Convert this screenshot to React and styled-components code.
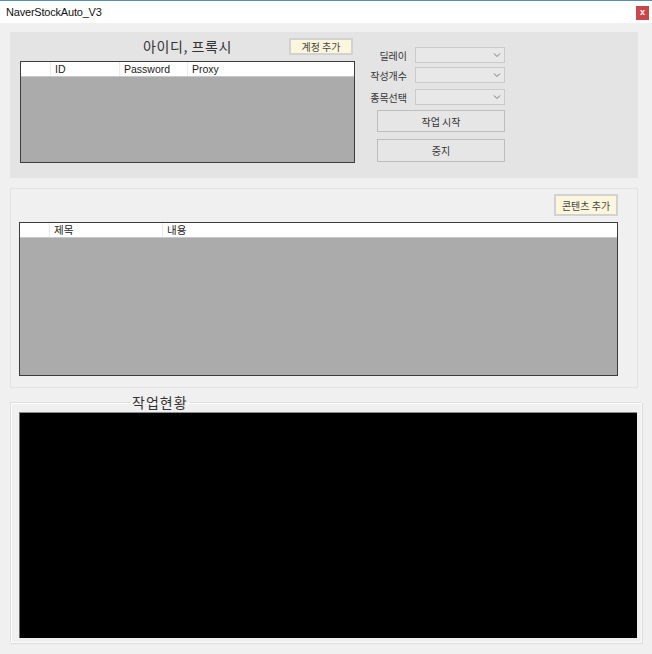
import React from "react";
import styled, { createGlobalStyle } from "styled-components";

const GlobalStyle = createGlobalStyle`
  html, body {
    margin: 0;
    padding: 0;
    background: #f0f0f0;
  }
  body {
    font-family: "Liberation Sans", "Noto Sans CJK KR", sans-serif;
    font-size: 11px;
    color: #1e1e1e;
  }
`;

const Window = styled.div`
  width: 652px;
  height: 654px;
  display: flex;
  flex-direction: column;
  background: #f0f0f0;
  overflow: hidden;
`;

const TitleBar = styled.div`
  height: 22px;
  border-top: 1px solid #5a8db4;
  background: #ffffff;
  display: flex;
  align-items: center;
  justify-content: space-between;
  padding: 0 3px 0 6px;
`;

const TitleText = styled.span`
  font-size: 11px;
  color: #111;
  letter-spacing: -0.2px;
`;

const CloseButton = styled.div`
  width: 13px;
  height: 14px;
  margin-top: 2px;
  background: #c9474a;
  color: #fff;
  font-size: 9px;
  line-height: 13px;
  text-align: center;
  font-weight: bold;
`;

const Body = styled.div`
  flex: 1;
  display: flex;
  flex-direction: column;
  padding: 9px 10px 0 10px;
  gap: 10px;
`;

const AccountPanel = styled.div`
  width: 628px;
  height: 146px;
  box-sizing: border-box;
  background: #e4e4e4;
  display: flex;
  align-items: flex-start;
  gap: 5px;
  padding: 6px 0 0 10px;
`;

const LeftColumn = styled.div`
  width: 335px;
  display: flex;
  flex-direction: column;
  gap: 6px;
`;

const HeaderRow = styled.div`
  height: 17px;
  display: grid;
  grid-template-columns: 1fr auto 1fr;
  align-items: center;
`;

const SectionTitle = styled.div`
  grid-column: 2;
  font-family: "Noto Sans CJK KR", sans-serif;
  font-size: 14px;
  color: #333;
  line-height: 17px;
  letter-spacing: 0.6px;
`;

const CreamButton = styled.div`
  justify-self: ${(p) => p.$justify || "auto"};
  width: ${(p) => p.$width}px;
  height: ${(p) => p.$height}px;
  margin-right: ${(p) => p.$mr || 0}px;
  box-sizing: border-box;
  background: #fcf7dc;
  border: 2px solid #d2d2d2;
  font-family: "Noto Sans CJK KR", sans-serif;
  font-size: 10px;
  color: #444;
  display: flex;
  align-items: center;
  justify-content: center;
`;

const Grid = styled.div`
  height: ${(p) => p.$height}px;
  box-sizing: border-box;
  border: 1px solid #3c3c3c;
  background: #ababab;
  display: flex;
  flex-direction: column;
`;

const GridHeader = styled.div`
  height: 14px;
  background: #fff;
  border-bottom: 1px solid #c8c8c8;
  display: flex;
`;

const HeaderCell = styled.div`
  width: ${(p) => (p.$width ? `${p.$width}px` : "auto")};
  flex: ${(p) => (p.$width ? "none" : 1)};
  border-right: ${(p) => (p.$last ? "none" : "1px solid #ececec")};
  padding-left: 4px;
  box-sizing: border-box;
  font-family: "Liberation Sans", "Noto Sans CJK KR", sans-serif;
  font-size: 10.5px;
  line-height: 14px;
  color: #222;
`;

const Controls = styled.div`
  width: 145px;
  margin-top: 9px;
  display: flex;
  flex-direction: column;
`;

const FieldRow = styled.div`
  display: grid;
  grid-template-columns: 47px 90px;
  column-gap: 8px;
  align-items: center;
  margin-bottom: ${(p) => p.$gap}px;
`;

const FieldLabel = styled.div`
  text-align: right;
  font-family: "Noto Sans CJK KR", sans-serif;
  font-size: 10px;
  color: #333;
`;

const Select = styled.div`
  height: 16px;
  box-sizing: border-box;
  border: 1px solid #cacaca;
  background: #e8e8e8;
  display: flex;
  align-items: center;
  justify-content: flex-end;
  padding-right: 3px;
  color: #777;
`;

const ActionButton = styled.div`
  width: 128px;
  height: ${(p) => p.$height}px;
  margin-left: 17px;
  margin-bottom: ${(p) => p.$gap || 0}px;
  box-sizing: border-box;
  border: 1px solid #bdbdbd;
  background: #e6e6e6;
  display: flex;
  align-items: center;
  justify-content: center;
  font-family: "Noto Sans CJK KR", sans-serif;
  font-size: 10px;
  color: #333;
`;

const ContentPanel = styled.div`
  width: 628px;
  height: 200px;
  box-sizing: border-box;
  border: 1px solid #e2e2e2;
  background: #f0f0f0;
  display: flex;
  flex-direction: column;
  align-items: stretch;
  gap: 6px;
  padding: 5px 19px 0 8px;
`;

const ButtonRow = styled.div`
  display: flex;
  justify-content: flex-end;
`;

const StatusBox = styled.fieldset`
  margin: -3px 0 0 0;
  width: 632px;
  box-sizing: border-box;
  border: 1px solid #dedede;
  border-color: #dedede #fafafa #fafafa #dedede;
  box-shadow: inset 1px 1px 0 #fff, 1px 1px 0 #dcdcdc;
  padding: 0 4px 4px 8px;
`;

const StatusLegend = styled.legend`
  margin-left: 111px;
  padding: 0 2px;
  font-family: "Noto Sans CJK KR", sans-serif;
  font-size: 14px;
  line-height: 14px;
  color: #333;
  letter-spacing: 1px;
`;

const Console = styled.div`
  height: 226px;
  margin-top: 3px;
  box-sizing: border-box;
  background: #000;
  border-top: 1px solid #8a8a8a;
  border-left: 1px solid #6a6a6a;
`;

function Chevron() {
  return (
    <svg width="8" height="6" viewBox="0 0 8 6">
      <path d="M1 1.5 L4 4.5 L7 1.5" fill="none" stroke="#777" strokeWidth="1" />
    </svg>
  );
}

const fields = [
  { label: "딜레이", gap: 4 },
  { label: "작성개수", gap: 6 },
  { label: "종목선택", gap: 5 },
];

export default function App() {
  return (
    <>
      <GlobalStyle />
      <Window>
        <TitleBar>
          <TitleText>NaverStockAuto_V3</TitleText>
          <CloseButton>x</CloseButton>
        </TitleBar>
        <Body>
          <AccountPanel>
            <LeftColumn>
              <HeaderRow>
                <SectionTitle>아이디, 프록시</SectionTitle>
                <CreamButton $justify="end" $width={64} $height={17} $mr={2}>
                  계정 추가
                </CreamButton>
              </HeaderRow>
              <Grid $height={102}>
                <GridHeader>
                  <HeaderCell $width={30} />
                  <HeaderCell $width={69}>ID</HeaderCell>
                  <HeaderCell $width={68}>Password</HeaderCell>
                  <HeaderCell $last>Proxy</HeaderCell>
                </GridHeader>
              </Grid>
            </LeftColumn>
            <Controls>
              {fields.map((f) => (
                <FieldRow key={f.label} $gap={f.gap}>
                  <FieldLabel>{f.label}</FieldLabel>
                  <Select>
                    <Chevron />
                  </Select>
                </FieldRow>
              ))}
              <ActionButton $height={22} $gap={7}>작업 시작</ActionButton>
              <ActionButton $height={23}>중지</ActionButton>
            </Controls>
          </AccountPanel>

          <ContentPanel>
            <ButtonRow>
              <CreamButton $width={64} $height={22}>콘텐츠 추가</CreamButton>
            </ButtonRow>
            <Grid $height={154}>
              <GridHeader>
                <HeaderCell $width={30} />
                <HeaderCell $width={113}>제목</HeaderCell>
                <HeaderCell $last>내용</HeaderCell>
              </GridHeader>
            </Grid>
          </ContentPanel>

          <StatusBox>
            <StatusLegend>작업현황</StatusLegend>
            <Console />
          </StatusBox>
        </Body>
      </Window>
    </>
  );
}
